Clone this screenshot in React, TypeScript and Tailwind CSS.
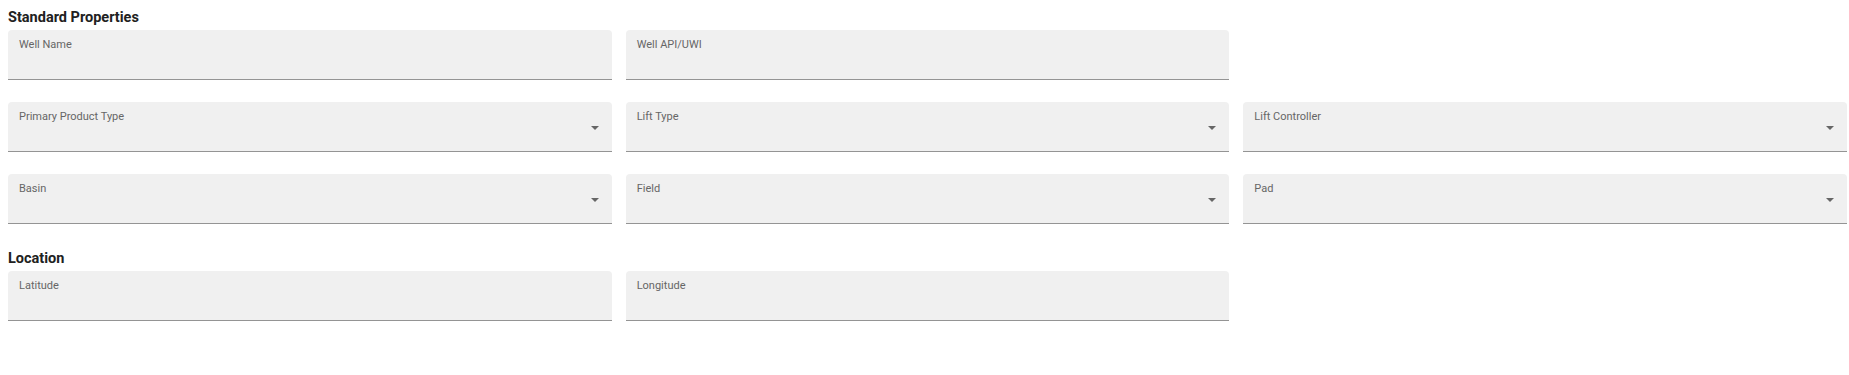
import React from 'react'

type FieldProps = { label: string; select?: boolean }

function Field({ label, select }: FieldProps) {
  return (
    <div className="relative h-[50px] rounded-t-[4px] border-b border-[#949494] bg-[#f0f0f0]">
      <div className="pl-[11px] pt-[8px] text-[11px] leading-[13px] text-[#666666]">{label}</div>
      {select && (
        <svg
          className="absolute right-[13px] top-[24px] h-[4px] w-[8px] text-[#666666]"
          viewBox="0 0 8 4"
          fill="currentColor"
        >
          <path d="M0 0h8L4 4z" />
        </svg>
      )}
    </div>
  )
}

function SectionTitle({ children, className = '' }: { children: React.ReactNode; className?: string }) {
  return (
    <h2 className={`mb-[2px] text-[14.5px] font-bold leading-5 text-[#212121] ${className}`}>{children}</h2>
  )
}

export default function App() {
  return (
    <div className="min-h-[375px] bg-white pl-2 pr-[2px] pt-[8px] font-['Roboto',sans-serif]">
      <SectionTitle>Standard Properties</SectionTitle>
      <div className="grid grid-cols-3 gap-x-[14px] gap-y-[22px]">
        <Field label="Well Name" />
        <Field label="Well API/UWI" />
        <div />
        <Field label="Primary Product Type" select />
        <Field label="Lift Type" select />
        <Field label="Lift Controller" select />
        <Field label="Basin" select />
        <Field label="Field" select />
        <Field label="Pad" select />
      </div>

      <SectionTitle className="mt-[25px]">Location</SectionTitle>
      <div className="grid grid-cols-3 gap-x-[14px]">
        <Field label="Latitude" />
        <Field label="Longitude" />
        <div />
      </div>
    </div>
  )
}
